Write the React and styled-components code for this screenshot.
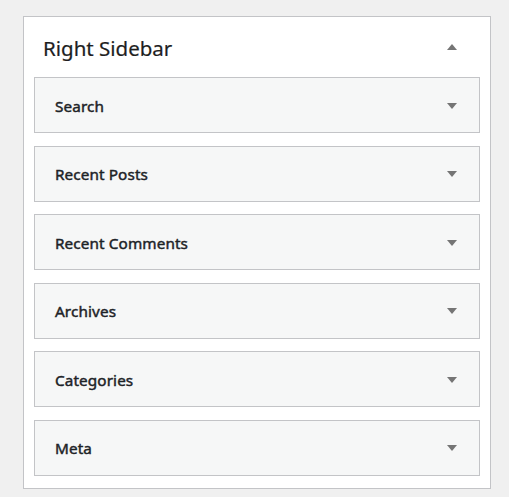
import React from "react";
import styled, { createGlobalStyle } from "styled-components";

const Global = createGlobalStyle`
  html, body { margin: 0; padding: 0; background: #f0f0f0; }
  body { font-family: "Noto Sans", "Open Sans", sans-serif; }
`;

const Page = styled.div`
  padding: 16px 0 0 23px;
`;

const Panel = styled.section`
  box-sizing: border-box;
  width: 468px;
  height: 473px;
  background: #fff;
  border: 1px solid #c3c4c7;
`;

const Header = styled.div`
  height: 60px;
  display: flex;
  align-items: center;
  justify-content: space-between;
  padding: 0 33px 0 19px;
`;

const Title = styled.h2`
  margin: 0;
  font-size: 20.5px;
  font-weight: 400;
  color: #1e1e1e;
  line-height: 1;
  padding-top: 3px;
  -webkit-text-stroke: 0.2px #1e1e1e;
`;

const List = styled.div`
  display: flex;
  flex-direction: column;
  gap: 12.6px;
  padding: 0 10px;
`;

const Widget = styled.div`
  box-sizing: border-box;
  height: 56px;
  background: #f6f7f7;
  border: 1px solid #c3c4c7;
  display: flex;
  align-items: center;
  justify-content: space-between;
  padding: 1px 22px 0 20px;
`;

const WidgetTitle = styled.span`
  font-size: 15.3px;
  font-weight: 400;
  letter-spacing: 0.1px;
  color: #1d2327;
  -webkit-text-stroke: 0.45px #1d2327;
`;

const Arrow = ({ up }) => (
  <svg width="10" height="6" viewBox="0 0 10 6" style={{ display: "block" }}>
    <path d={up ? "M0 6 L5 0 L10 6 Z" : "M0 0 L10 0 L5 6 Z"} fill="#757575" />
  </svg>
);

const widgets = ["Search", "Recent Posts", "Recent Comments", "Archives", "Categories", "Meta"];

export default function App() {
  return (
    <>
      <Global />
      <Page>
        <Panel>
          <Header>
            <Title>Right Sidebar</Title>
            <Arrow up />
          </Header>
          <List>
            {widgets.map((w) => (
              <Widget key={w}>
                <WidgetTitle>{w}</WidgetTitle>
                <Arrow />
              </Widget>
            ))}
          </List>
        </Panel>
      </Page>
    </>
  );
}
